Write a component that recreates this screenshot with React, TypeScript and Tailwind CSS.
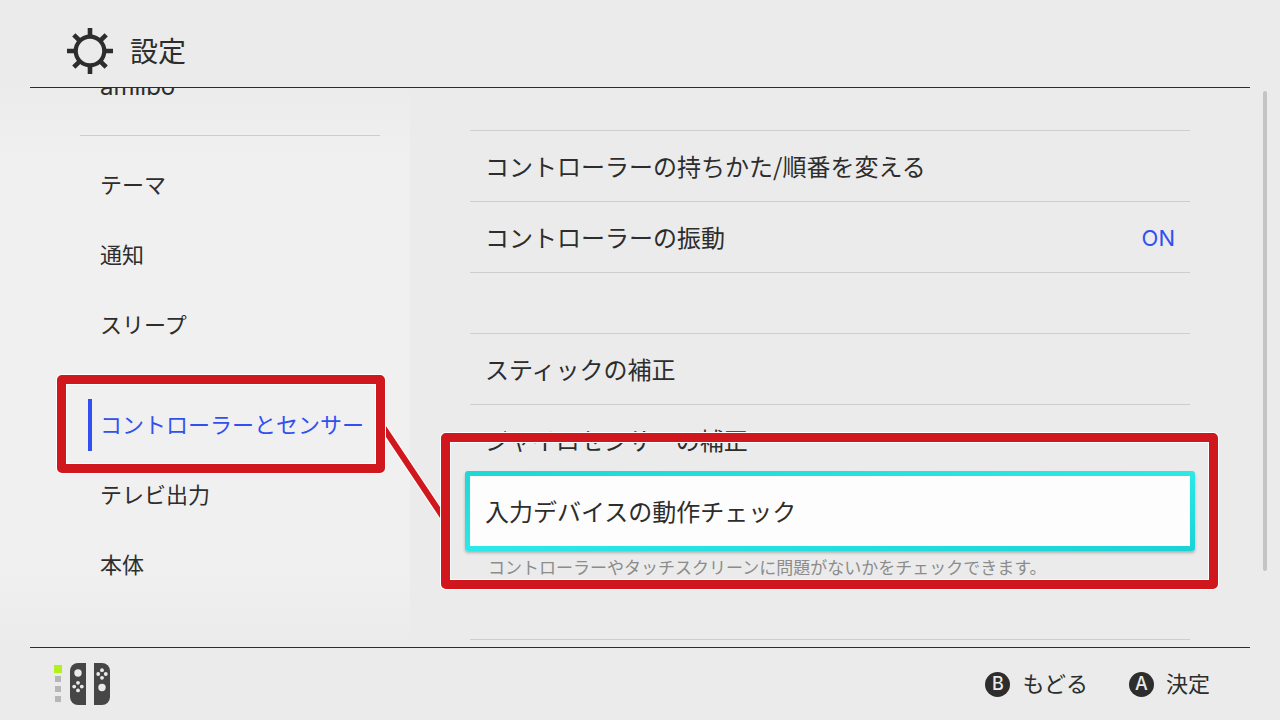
import React from "react";

type NavItem = { label: string; active?: boolean };

const NAV_ITEMS: NavItem[] = [
  { label: "テーマ" },
  { label: "通知" },
  { label: "スリープ" },
  { label: "コントローラーとセンサー", active: true },
  { label: "テレビ出力" },
  { label: "本体" },
];

const GearIcon: React.FC = () => (
  <svg viewBox="0 0 46 46" className="h-[46px] w-[46px]" fill="none" stroke="#2d2d2d">
    <circle cx="23" cy="23" r="14.3" strokeWidth="4.2" />
    <g strokeWidth="4.6">
      <path d="M23 0v9M23 37v9M0 23h9M37 23h9" />
      <path d="M6.8 6.8l6.4 6.4M32.8 32.8l6.4 6.4M39.2 6.8l-6.4 6.4M13.2 32.8l-6.4 6.4" />
    </g>
  </svg>
);

// プレイヤーランプと Joy-Con
const JoyConIcon: React.FC = () => (
  <svg viewBox="0 0 56 42" className="h-[42px] w-14" aria-label="Joy-Con">
    <rect x="0" y="2" width="8" height="8" fill="#b4f01e" />
    <g fill="#b6b6b6">
      <rect x="1" y="13" width="6" height="6" />
      <rect x="1" y="23" width="6" height="6" />
      <rect x="1" y="33" width="6" height="6" />
    </g>
    <g fill="#464646">
      <path d="M32 0v42h-8a8 8 0 0 1-8-8V8a8 8 0 0 1 8-8z" />
      <path d="M40 0h8a8 8 0 0 1 8 8v26a8 8 0 0 1-8 8h-8z" />
    </g>
    <g fill="#ebebeb">
      <circle cx="24" cy="10" r="3.7" />
      <circle cx="24" cy="19.8" r="1.9" />
      <circle cx="24" cy="27.4" r="1.9" />
      <circle cx="20.2" cy="23.6" r="1.9" />
      <circle cx="27.8" cy="23.6" r="1.9" />
      <circle cx="48" cy="24.5" r="3.7" />
      <circle cx="48" cy="7.2" r="1.9" />
      <circle cx="48" cy="14.8" r="1.9" />
      <circle cx="44.2" cy="11" r="1.9" />
      <circle cx="51.8" cy="11" r="1.9" />
    </g>
  </svg>
);

const FRAME =
  "pointer-events-none absolute rounded-[5px] border-[9px] border-[#cf171d] shadow-[0_0_0_1px_#fff,inset_0_0_0_1px_#fff]";

const Row: React.FC<{ label: string; value?: string }> = ({ label, value }) => (
  <button className="flex h-[71px] w-full items-center justify-between border-t border-[#cdcdcd] px-[15px] text-2xl">
    <span>{label}</span>
    {value && <span className="pt-1 font-['Inter'] text-[22px] text-[#3250f0]">{value}</span>}
  </button>
);

const FooterButton: React.FC<{ glyph: string; label: string }> = ({ glyph, label }) => (
  <button className="flex items-center gap-3 text-[22px]">
    <span className="flex h-[25px] w-[25px] items-center justify-center rounded-full bg-[#2d2d2d] font-['Inter'] text-lg font-medium leading-none text-[#ebebeb]">
      {glyph}
    </span>
    <span className="pb-1">{label}</span>
  </button>
);

const App: React.FC = () => {
  return (
    <div className="flex h-screen flex-col overflow-hidden bg-[#ebebeb] font-['Noto_Sans_CJK_JP',sans-serif] text-[#2d2d2d]">
      <header className="mx-[30px] flex h-[88px] shrink-0 items-center gap-[17px] border-b border-[#2d2d2d] pt-[14px] pl-[37px]">
        <GearIcon />
        <h1 className="pb-0.5 text-[28px] font-normal">設定</h1>
      </header>

      <main className="relative flex min-h-0 flex-1 overflow-hidden">
        {/* 左メニュー */}
        <nav className="z-10 w-[410px] shrink-0 bg-[linear-gradient(to_bottom,#ebebeb,#f0f0f0_12%,#f0f0f0_86%,#ebebeb)] pr-[30px] pl-20">
          <button className="-mt-[38px] flex h-[70px] w-full items-center px-5 pt-1 font-['Inter'] text-2xl">
            amiibo
          </button>
          <hr className="mt-[15px] mb-[14px] border-[#cdcdcd]" />
          {NAV_ITEMS.map((item) =>
            item.active ? (
              <div key={item.label} className="relative mt-[30px]">
                <button
                  aria-current="page"
                  className="flex h-[70px] w-full items-center gap-2 pl-2 text-[22px] whitespace-nowrap text-[#3250f0]"
                >
                  <span className="h-[52px] w-1 bg-[#3250f0]" />
                  <span className="pb-1">{item.label}</span>
                </button>
                <svg
                  viewBox="0 0 56 144"
                  className="pointer-events-none absolute -top-[15px] left-[305px] h-36 w-14"
                  fill="none"
                >
                  <path d="M-2 52L58 142" stroke="#fff" strokeWidth="8" />
                  <path d="M-2 52L58 142" stroke="#cf171d" strokeWidth="6" />
                </svg>
                <div className={`${FRAME} -top-[15px] -right-[5px] -bottom-[13px] -left-[23px]`} />
              </div>
            ) : (
              <button key={item.label} className="flex h-[70px] w-full items-center px-5 pb-1 text-[22px]">
                {item.label}
              </button>
            )
          )}
        </nav>

        {/* 設定項目 */}
        <section className="flex-1 pt-[42px] pr-[90px] pl-[60px]">
          <Row label="コントローラーの持ちかた/順番を変える" />
          <Row label="コントローラーの振動" value="ON" />
          <div className="h-[61px] border-t border-[#cdcdcd]" />
          <Row label="スティックの補正" />
          <Row label="ジャイロセンサーの補正" />

          <div className="relative z-20 -mt-1">
            <div className={`${FRAME} -top-[38px] -right-[28px] -bottom-[38px] -left-[29px]`} />
            <div className="relative -mx-[5px] rounded-[3px] bg-linear-to-br from-[#1ed8d8] via-[#2ce8e6] to-[#1ad2d6] p-[5px] shadow-[0_2px_3px_rgba(0,0,0,0.25)]">
              <button className="flex h-[70px] w-full items-center bg-[#fdfdfd] px-[15px] text-2xl">
                入力デバイスの動作チェック
              </button>
            </div>
            <p className="absolute top-full left-[18px] mt-1 text-[17px] leading-6 text-[#8c8c8c]">
              コントローラーやタッチスクリーンに問題がないかをチェックできます。
            </p>
          </div>
          <hr className="mt-[88px] border-[#cdcdcd]" />
        </section>

        <div className="absolute top-[3px] right-[13px] h-[480px] w-1 rounded-full bg-[#c4c4c4]" />
      </main>

      <footer className="mx-[30px] flex h-[73px] shrink-0 items-center justify-between border-t border-[#2d2d2d] pr-10 pl-6">
        <JoyConIcon />
        <div className="flex gap-[41px]">
          <FooterButton glyph="B" label="もどる" />
          <FooterButton glyph="A" label="決定" />
        </div>
      </footer>
    </div>
  );
};

export default App;
